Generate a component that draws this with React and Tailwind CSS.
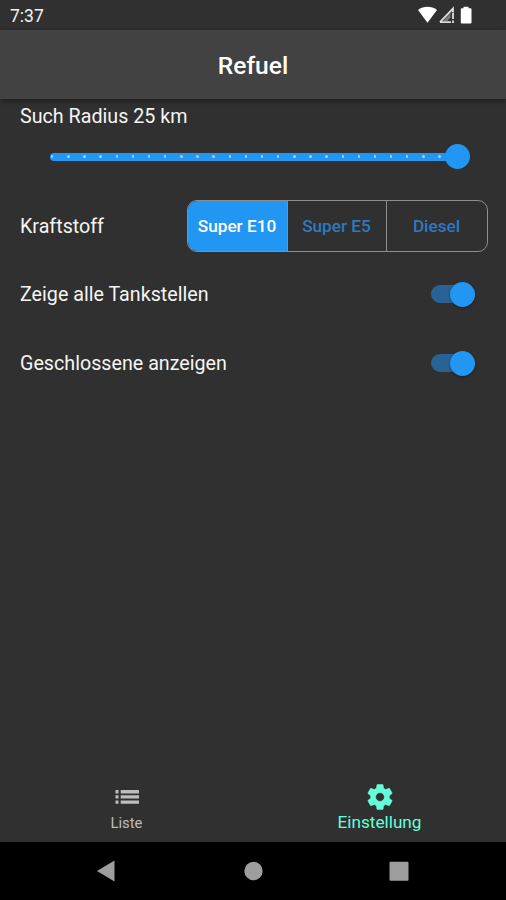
import React from "react";

const TICKS = Array.from({ length: 25 }, (_, i) => i);

function StatusBar() {
  return (
    <div className="flex h-[30px] items-center justify-between pl-[10px] pr-[32px]">
      <span className="pt-[3px] text-[17.5px] leading-none text-[#f2f2f2]">7:37</span>
      <svg width="56" height="18" viewBox="0 0 56 18" className="block">
        <path d="M0 4C5.5 -0.4 13.5 -0.4 19 4L9.5 16.7Z" fill="#fff" />
        <path d="M22 16.2L35 2.6V6M22 16.2H33" fill="none" stroke="#ddd" strokeWidth="1.8" />
        <path d="M24.5 15.5L32.5 7V11.5L29 15.5Z" fill="#aaa" opacity=".6" />
        <path d="M35 6.5V13M35 14.6V17" stroke="#ddd" strokeWidth="1.8" />
        <path d="M45.5 0.7H50.5V2.2H52.5Q53.5 2.2 53.5 3.2V16.2Q53.5 17.4 52.5 17.4H43.8Q42.8 17.4 42.8 16.2V3.2Q42.8 2.2 43.8 2.2H45.5Z" fill="#fff" />
      </svg>
    </div>
  );
}

function RadiusSlider() {
  return (
    <div className="mt-[13.5px] flex h-[26px] items-center pl-[50px] pr-9">
      <div className="relative flex h-2 w-[408px] items-center justify-between rounded-full bg-[#2196f3] pl-[1px] pr-[17px]">
        {TICKS.map((i) => (
          <span key={i} className="h-[2.4px] w-[2.4px] rounded-full bg-[#a3d3fa]" />
        ))}
        <span className="absolute -top-[8.5px] left-[395px] h-[25px] w-[25px] rounded-full bg-[#2196f3]" />
      </div>
    </div>
  );
}

function Toggle({ label }) {
  return (
    <div className="flex h-[69px] items-center justify-between pl-5 pr-[31px]">
      <Label>{label}</Label>
      <div className="relative h-[18px] w-[44.5px] rounded-full bg-[#296396]">
        <span className="absolute -top-[3.5px] left-[19.5px] h-[25px] w-[25px] rounded-full bg-[#2196f3] shadow-[0_1px_3px_rgba(0,0,0,0.35)]" />
      </div>
    </div>
  );
}

function Label({ children }) {
  return <span className="whitespace-nowrap pt-[2px] text-[19.7px] leading-6 text-[#f5f5f5]">{children}</span>;
}

export default function App() {
  return (
    <div className="flex h-[900px] w-[506px] flex-col overflow-hidden bg-[#303030] font-['Roboto','Liberation_Sans',sans-serif]">
      <StatusBar />
      <header className="flex h-[69px] items-center justify-center bg-[#424242] pt-[3px] shadow-[0_2px_5px_rgba(0,0,0,0.4)]">
        <h1 className="text-[24.6px] font-medium leading-none text-white">Refuel</h1>
      </header>
      <main className="flex flex-1 flex-col">
        <div className="flex h-[34px] items-center pl-5">
          <Label>Such Radius 25 km</Label>
        </div>
        <div className="-mt-[3px]">
          <RadiusSlider />
        </div>
        <div className="mt-[30px] flex h-[52px] items-center justify-between pl-5 pr-[18.5px]">
          <Label>Kraftstoff</Label>
          <div className="flex h-[52px] w-[301px] overflow-hidden rounded-[10px] border-[1.5px] border-[#8e8e8e] text-[17.2px]">
            <div className="flex w-[100px] items-center justify-center border-r border-[#8e8e8e] bg-[#2196f3] pt-[2px] font-medium text-white">Super E10</div>
            <div className="flex w-[99px] items-center justify-center border-r border-[#8e8e8e] pt-[2px] font-medium text-[#2c7ac2]">Super E5</div>
            <div className="flex flex-1 items-center justify-center pt-[2px] font-medium text-[#2c7ac2]">Diesel</div>
          </div>
        </div>
        <div className="mt-[8px]">
          <Toggle label="Zeige alle Tankstellen" />
          <Toggle label="Geschlossene anzeigen" />
        </div>
      </main>
      <nav className="flex h-[69px]">
        <div className="flex flex-1 flex-col items-center pt-[17px] text-[#bdbdbd]">
          <svg width="24" height="15" viewBox="0 0 24 15" fill="currentColor">
            <path d="M0.5 0h3v3.4h-3zM0.5 5.2h3v3.4h-3zM0.5 10.4h3v3.4h-3zM5.7 0H24v3.4H5.7zM5.7 5.2H24v3.4H5.7zM5.7 10.4H24v3.4H5.7z" />
          </svg>
          <span className="mt-[9px] text-[14.8px] leading-[18px]">Liste</span>
        </div>
        <div className="flex flex-1 flex-col items-center pt-[9px] text-[#64ffda]">
          <svg width="30" height="30" viewBox="0 0 24 24" fill="currentColor" stroke="currentColor" strokeWidth="0.4">
            <path d="M19.43 12.98c.04-.32.07-.64.07-.98s-.03-.66-.07-.98l2.11-1.65c.19-.15.24-.42.12-.64l-2-3.46c-.12-.22-.39-.3-.61-.22l-2.49 1c-.52-.4-1.08-.73-1.69-.98l-.38-2.65C14.46 2.18 14.25 2 14 2h-4c-.25 0-.46.18-.49.42l-.38 2.65c-.61.25-1.17.59-1.69.98l-2.49-1c-.23-.09-.49 0-.61.22l-2 3.46c-.13.22-.07.49.12.64l2.11 1.65c-.04.32-.07.65-.07.98s.03.66.07.98l-2.11 1.65c-.19.15-.24.42-.12.64l2 3.46c.12.22.39.3.61.22l2.49-1c.52.4 1.08.73 1.69.98l.38 2.65c.03.24.24.42.49.42h4c.25 0 .46-.18.49-.42l.38-2.65c.61-.25 1.17-.59 1.69-.98l2.49 1c.23.09.49 0 .61-.22l2-3.46c.12-.22.07-.49-.12-.64l-2.11-1.65zM12 15.5c-1.93 0-3.5-1.57-3.5-3.5s1.57-3.5 3.5-3.5 3.5 1.57 3.5 3.5-1.57 3.5-3.5 3.5z" />
          </svg>
          <span className="text-[17.2px] leading-5">Einstellung</span>
        </div>
      </nav>
      <footer className="h-[58px] bg-black">
        <svg width="506" height="58" viewBox="0 0 506 58" fill="#9e9e9e" className="block">
          <path d="M97 29L114.5 18.5V39.5Z" />
          <circle cx="253.5" cy="29" r="9.2" />
          <rect x="389.5" y="19.7" width="19" height="19" rx="1" />
        </svg>
      </footer>
    </div>
  );
}
